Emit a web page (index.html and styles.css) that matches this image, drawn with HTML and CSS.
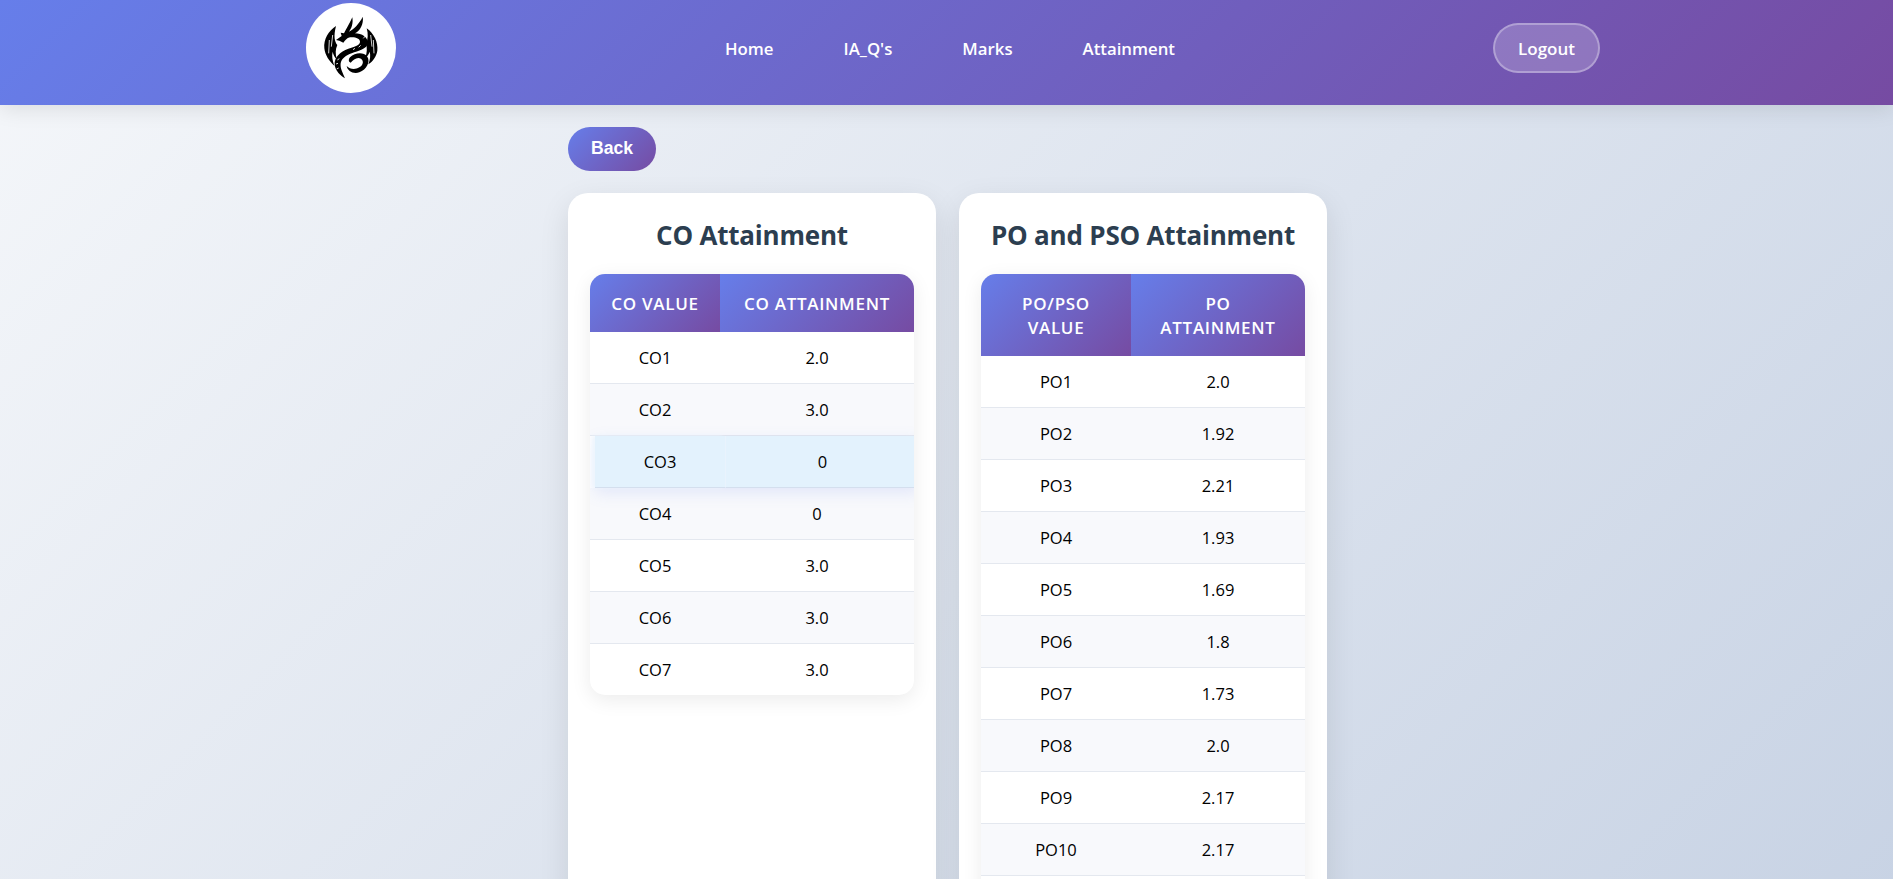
FILE: index.html
```html
<!DOCTYPE html>
<html lang="en">
<head>
<meta charset="utf-8">
<title>Attainment</title>
<link rel="stylesheet" href="styles.css">
</head>
<body>
<header class="topbar">
  <div class="logo">
    <svg class="dragon" viewBox="18 9 270 270" aria-hidden="true">
      <path class="ink" d="M108 78 C86 92 70 118 73 145 C75 165 88 185 103 197 C97 180 95 168 98 155 C100 165 104 172 110 178 C106 160 106 148 112 135 C104 125 100 110 108 78Z"/>
      <path class="ink" d="M200 85 C222 100 235 128 232 152 C229 170 218 185 205 193 C211 178 212 165 209 155 C206 163 201 170 196 173 C201 158 202 145 198 132 C204 118 205 100 200 85Z"/>
      <path class="ink" d="M108 120 L125 108 L122 98 L132 100 C138 88 148 72 157 52 C160 70 155 85 147 95 C160 88 178 72 188 50 C192 72 180 92 165 100 C185 100 205 112 203 130 C201 148 175 152 155 160 C138 166 125 175 122 190 C120 205 128 218 135 235 C122 228 106 212 104 195 C102 172 120 155 145 146 C165 140 180 135 180 125 C180 115 165 110 150 112 C140 114 135 122 130 128 L118 122Z"/>
      <path class="ink" d="M150 172 C165 158 190 155 202 170 C212 185 200 208 178 217 C160 224 142 212 140 198 C150 208 165 210 178 202 C190 195 192 183 183 176 C172 170 160 178 152 188 C145 186 145 178 150 172Z"/>
      <path class="rib" d="M88 120 L86 160 M98 105 L94 140 M220 120 L222 160 M212 105 L216 140 M118 176 L112 180 M114 190 L108 192 M116 204 L110 207 M190 115 L196 108 M176 142 L182 136 M160 150 L164 144"/>
    </svg>
  </div>
  <nav class="nav">
    <a href="#">Home</a>
    <a href="#">IA_Q's</a>
    <a href="#">Marks</a>
    <a href="#">Attainment</a>
  </nav>
  <a class="logout" href="#">Logout</a>
</header>
<main class="page">
  <button class="back" type="button">Back</button>
  <div class="cards">
    <section class="card">
      <h2>CO Attainment</h2>
      <div class="table-wrap">
        <table class="co">
          <thead><tr><th>CO Value</th><th>CO Attainment</th></tr></thead>
          <tbody>
            <tr><td>CO1</td><td>2.0</td></tr>
            <tr><td>CO2</td><td>3.0</td></tr>
            <tr class="hover"><td>CO3</td><td>0</td></tr>
            <tr><td>CO4</td><td>0</td></tr>
            <tr><td>CO5</td><td>3.0</td></tr>
            <tr><td>CO6</td><td>3.0</td></tr>
            <tr><td>CO7</td><td>3.0</td></tr>
          </tbody>
        </table>
      </div>
    </section>
    <section class="card">
      <h2>PO and PSO Attainment</h2>
      <div class="table-wrap">
        <table class="po">
          <thead><tr><th>PO/PSO Value</th><th>PO Attainment</th></tr></thead>
          <tbody>
            <tr><td>PO1</td><td>2.0</td></tr>
            <tr><td>PO2</td><td>1.92</td></tr>
            <tr><td>PO3</td><td>2.21</td></tr>
            <tr><td>PO4</td><td>1.93</td></tr>
            <tr><td>PO5</td><td>1.69</td></tr>
            <tr><td>PO6</td><td>1.8</td></tr>
            <tr><td>PO7</td><td>1.73</td></tr>
            <tr><td>PO8</td><td>2.0</td></tr>
            <tr><td>PO9</td><td>2.17</td></tr>
            <tr><td>PO10</td><td>2.17</td></tr>
            <tr><td>&nbsp;</td><td>&nbsp;</td></tr>
          </tbody>
        </table>
      </div>
    </section>
  </div>
</main>
</body>
</html>
```
FILE: styles.css
```css
* { box-sizing: border-box; }
html { overflow: hidden; }
body {
  margin: 0;
  min-height: 1200px;
  font-family: "Open Sans", "Noto Sans", sans-serif;
  background: linear-gradient(135deg, #f5f7fa 0%, #c3cfe2 100%);
  color: #000;
}
.topbar {
  position: relative;
  z-index: 2;
  height: 105px;
  display: flex;
  align-items: flex-start;
  padding: 3px 293px 0 306px;
  background: linear-gradient(135deg, #667eea 0%, #764ba2 100%);
  box-shadow: 0 4px 20px rgba(0, 0, 0, 0.1);
}
.logo {
  width: 90px;
  height: 90px;
  border-radius: 50%;
  background: #fff;
  flex: none;
}
.dragon { display: block; width: 90px; height: 90px; }
.ink { fill: #000; }
.rib { fill: none; stroke: #fff; stroke-width: 2.5; }
.nav {
  display: flex;
  gap: 70px;
  margin-left: 329px;
  height: 90px;
  align-items: center;
}
.nav a, .logout {
  color: #fff;
  text-decoration: none;
  font-weight: 600;
  font-size: 16.8px;
}
.logout {
  margin-left: auto;
  margin-top: 20px;
  width: 107px;
  height: 50px;
  display: flex;
  align-items: center;
  justify-content: center;
  border: 2px solid rgba(255, 255, 255, 0.3);
  border-radius: 25px;
  background: rgba(255, 255, 255, 0.2);
  font-size: 17px;
}
.page {
  width: 759px;
  margin: 0 auto;
  padding-top: 22px;
  transform: translateX(1px);
}
.back {
  display: block;
  width: 88px;
  height: 44px;
  border: 0;
  border-radius: 22px;
  background: linear-gradient(135deg, #667eea 0%, #764ba2 100%);
  color: #fff;
  font-family: "Liberation Sans", Arial, sans-serif;
  font-weight: 700;
  font-size: 17.6px;
  padding: 0 0 2px;
}
.cards {
  display: flex;
  gap: 23px;
  margin-top: 22px;
  align-items: flex-start;
}
.card {
  width: 368px;
  height: 900px;
  flex: none;
  padding: 22px;
  background: #fff;
  border-radius: 20px;
  box-shadow: 0 10px 30px rgba(0, 0, 0, 0.1);
}
.card h2 {
  margin: 0 0 22px;
  height: 37px;
  line-height: 41px;
  text-align: center;
  font-size: 26px;
  font-weight: 700;
  letter-spacing: -0.2px;
  color: #2c3e50;
  white-space: nowrap;
}
.table-wrap {
  border-radius: 15px;
  overflow: hidden;
  box-shadow: 0 5px 20px rgba(0, 0, 0, 0.08);
  background: #fff;
}
table {
  width: 324px;
  border-collapse: separate;
  border-spacing: 0;
  table-layout: fixed;
}
.co th:first-child { width: 130px; }
.po th:first-child { width: 150px; }
th {
  padding: 18px 20px 16px;
  background: linear-gradient(135deg, #667eea 0%, #764ba2 100%);
  color: #fff;
  font-size: 17px;
  line-height: 24px;
  font-weight: 600;
  text-transform: uppercase;
  letter-spacing: 0.7px;
  text-align: center;
}
.co th { padding-left: 10px; padding-right: 10px; }
td {
  height: 52px;
  padding: 0 15px;
  border-bottom: 1px solid #e4e8ef;
  text-align: center;
  font-size: 16.5px;
}
tbody tr:nth-child(even) td { background-color: #f8f9fc; }
tbody tr:last-child td { border-bottom: 0; height: 51px; }
tbody tr.hover { transform: translateX(5px); box-shadow: 0 5px 15px rgba(102, 126, 234, 0.15); position: relative; }
tbody tr.hover td { background-color: #e3f2fd; border-bottom-color: #d4dfee; }
tbody tr.hover td:first-child { box-shadow: -3px 0 4px #edf5fd; }
tbody tr.hover td + td { border-left: 1px solid #e9f3fd; }
```
